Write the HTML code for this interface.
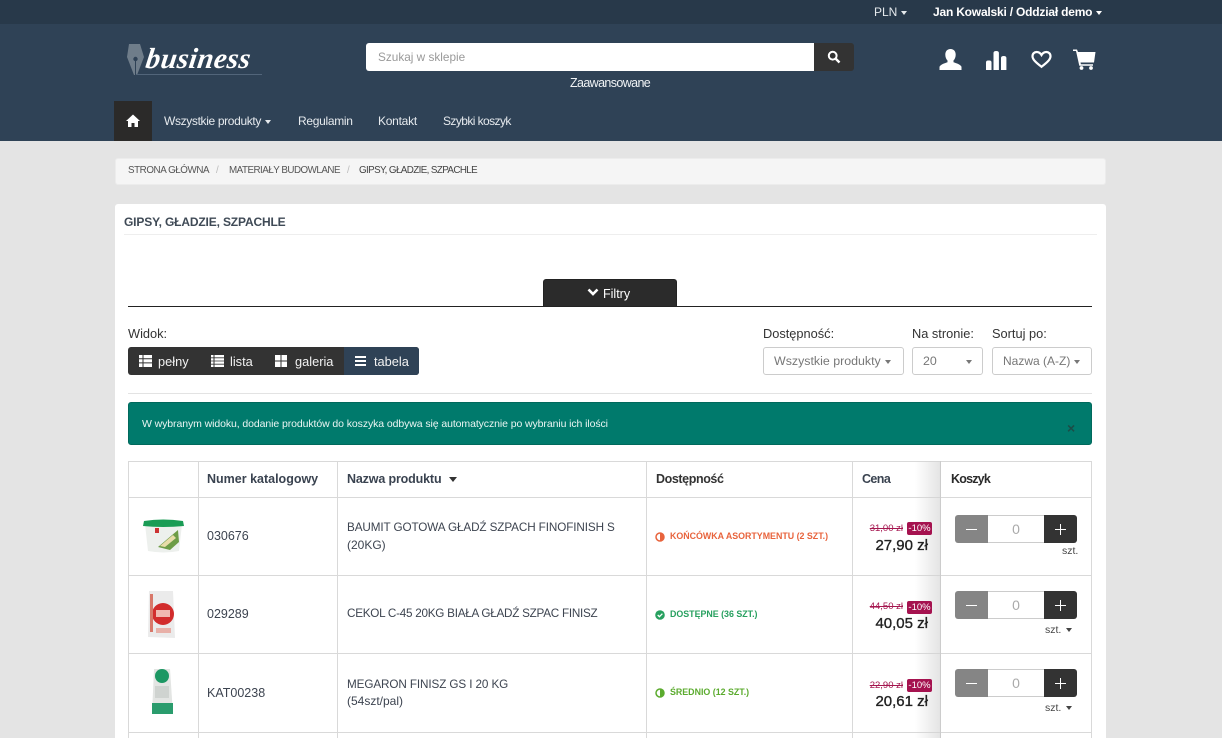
<!DOCTYPE html>
<html lang="pl"><head><meta charset="utf-8"><title>Gipsy, gładzie, szpachle</title>
<style>
*{box-sizing:border-box}
html{margin:0;padding:0;width:1222px;height:738px;overflow:hidden}
body{margin:0;padding:0;width:1222px;height:738px;overflow:hidden;position:relative;background:#e4e4e4;font-family:"Liberation Sans",sans-serif;font-size:12.5px;color:#333}
.a{position:absolute;white-space:nowrap}
.caret{display:inline-block;width:0;height:0;border-left:3.5px solid transparent;border-right:3.5px solid transparent;border-top:4px solid currentColor;vertical-align:middle;margin-left:4px}
.line{position:absolute;background:#d9d9d9}
.sel{position:absolute;top:347px;height:28px;border:1px solid #ccc;border-radius:3px;background:#fff;color:#777;line-height:26px;padding-left:10px;font-size:12.4px;white-space:nowrap}
.lbl{position:absolute;top:326px;color:#333;font-size:12.8px;white-space:nowrap}
.th{position:absolute;top:472px;font-weight:bold;font-size:12.5px;color:#3a4350;white-space:nowrap}
.td{position:absolute;font-size:12.5px;color:#3d4450;white-space:nowrap}
.st{position:absolute;font-size:8.85px;font-weight:bold;white-space:nowrap}
.old{position:absolute;font-size:9.5px;color:#a5164f;text-decoration:line-through;white-space:nowrap;text-align:right;right:319px}
.bad{position:absolute;left:907px;width:25px;height:13px;background:#a5124f;color:#fff;font-size:9.5px;line-height:13px;text-align:center;border-radius:2px}
.pr{position:absolute;font-size:15px;color:#222;right:294px;white-space:nowrap;-webkit-text-stroke:.35px #222}
.m{position:absolute;left:955px;width:33px;height:28px;border-radius:3px 0 0 3px;background:linear-gradient(#fff,#fff) center/11px 1px no-repeat,#858585}
.q{position:absolute;left:988px;width:56px;height:28px;border-top:1px solid #ccc;border-bottom:1px solid #ccc;background:#fff;color:#aaa;font-size:14px;line-height:26px;text-align:center}
.p{position:absolute;left:1044px;width:33px;height:28px;border-radius:0 3px 3px 0;background:linear-gradient(#fff,#fff) center/11px 1px no-repeat,linear-gradient(#fff,#fff) center/1px 11px no-repeat,#333}
.szt{position:absolute;font-size:10.5px;color:#444;white-space:nowrap}
.tb{position:absolute;top:354px;color:#f2f2f2;font-size:12.8px;white-space:nowrap}
.nv{position:absolute;top:114px;color:#e6eaee;font-size:12px;white-space:nowrap}
.bc{position:absolute;top:165px;font-size:9.8px;color:#555;letter-spacing:-.42px;white-space:nowrap}
</style></head><body>

<div class="a" style="left:0;top:0;width:1222px;height:24px;background:#28394a"></div>
<div class="a" style="left:0;top:24px;width:1222px;height:117px;background:#2f4256"></div>
<div class="a" style="left:874px;top:5px;color:#e5e9ec;font-size:12px">PLN<span class="caret"></span></div>
<div class="a" style="left:933px;top:5px;color:#fff;font-size:12px;font-weight:bold;letter-spacing:-.2px">Jan Kowalski / Oddział demo<span class="caret"></span></div>

<!-- logo -->
<svg class="a" style="left:126px;top:43px" width="20" height="35" viewBox="0 0 20 35"><path d="M3 1h11l4 13-7 18H8L1 14z" fill="#6f7d8a"/><circle cx="9.500" cy="16" r="2.200" fill="#2f4256"/><path d="M9.500 18v14" stroke="#2f4256" stroke-width="1"/></svg>
<div class="a" style="left:146px;top:43px;color:#fff;font-family:'Liberation Serif',serif;font-style:italic;font-size:29px;letter-spacing:.4px;font-weight:bold;transform:skewX(-8deg)">business</div>
<div class="a" style="left:136px;top:74px;width:126px;height:1px;background:#52657a"></div>

<!-- search -->
<div class="a" style="left:366px;top:43px;width:449px;height:28px;background:#fff;border-radius:3px 0 0 3px;color:#999;font-size:11.8px;line-height:29px;padding-left:12px">Szukaj w sklepie</div>
<div class="a" style="left:814px;top:43px;width:40px;height:28px;background:#333;border-radius:0 3px 3px 0"></div>
<svg class="a" style="left:827px;top:50px" width="14" height="14" viewBox="0 0 14 14"><circle cx="5.700" cy="5.700" r="3.900" fill="none" stroke="#fff" stroke-width="2"/><path d="M8.500 8.500l4 4" stroke="#fff" stroke-width="2.400"/></svg>
<div class="a" style="left:570px;top:76px;color:#f0f3f5;font-size:12.5px;letter-spacing:-.62px">Zaawansowane</div>

<!-- header icons -->
<svg class="a" style="left:939px;top:48px" width="23" height="23" viewBox="0 0 23 23"><path d="M11.500 1c3.500 0 5.200 2.500 5.200 5.700 0 2.500-1 4.600-2.200 5.800v1.800c3 1.100 7 2.200 8 4.500V22H.5v-3.200c1-2.300 5-3.400 8-4.500v-1.800C7.300 11.300 6.300 9.200 6.300 6.700 6.300 3.500 8 1 11.500 1z" fill="#fff"/></svg>
<svg class="a" style="left:986px;top:50px" width="21" height="21" viewBox="0 0 21 21"><path d="M0 12.500q0-2 2-2h1.500q2 0 2 2V20H0zM7.500 3q0-2 2.700-2t2.700 2v17H7.500zM15 8q0-2 2.700-2t2.700 2v12H15z" fill="#fff"/></svg>
<svg class="a" style="left:1031px;top:50px" width="21" height="19" viewBox="0 0 21 19"><path d="M10.500 16.800C5 12.500 1.500 9.500 1.500 6.200 1.500 3.700 3.300 2 5.600 2c2 0 3.700 1 4.900 3 1.200-2 2.900-3 4.900-3 2.300 0 4.100 1.700 4.100 4.200 0 3.300-3.500 6.300-9 10.600z" fill="none" stroke="#fff" stroke-width="2.200"/></svg>
<svg class="a" style="left:1073px;top:48px" width="23" height="23" viewBox="0 0 23 23"><path d="M0 1.500h4l1 2.500h17.500l-1.500 10.500H7.500l.4 1.700H20v1.500H6.300L3 3H0z" fill="#fff"/><circle cx="8.500" cy="20" r="1.900" fill="#fff"/><circle cx="18" cy="20" r="1.900" fill="#fff"/></svg>

<!-- nav -->
<div class="a" style="left:114px;top:101px;width:38px;height:40px;background:#2b2a29"></div>
<svg class="a" style="left:126px;top:114px" width="14" height="13" viewBox="0 0 14 13"><path d="M7 .5l7 6.500h-2v6H8.500V9h-3v4H2V7H0z" fill="#fff"/></svg>
<div class="nv" style="left:164px;letter-spacing:-.35px">Wszystkie produkty<span class="caret"></span></div>
<div class="nv" style="left:298px;letter-spacing:-.3px">Regulamin</div>
<div class="nv" style="left:378px;letter-spacing:-.25px">Kontakt</div>
<div class="nv" style="left:443px;letter-spacing:-.58px">Szybki koszyk</div>

<!-- breadcrumb -->
<div class="a" style="left:115px;top:158px;width:991px;height:27px;background:#f5f5f5;border:1px solid #ececec;border-radius:3px"></div>
<div class="bc" style="left:128px">STRONA GŁÓWNA</div>
<div class="bc" style="left:216px;color:#bbb">/</div>
<div class="bc" style="left:229px;letter-spacing:-.5px">MATERIAŁY BUDOWLANE</div>
<div class="bc" style="left:347px;color:#bbb">/</div>
<div class="bc" style="left:359px;color:#444;letter-spacing:-.6px">GIPSY, GŁADZIE, SZPACHLE</div>

<!-- panel -->
<div class="a" style="left:115px;top:204px;width:991px;height:540px;background:#fff;border-radius:3px"></div>
<div class="a" style="left:124px;top:215px;font-size:12px;font-weight:bold;color:#3f4a56;letter-spacing:-.15px">GIPSY, GŁADZIE, SZPACHLE</div>
<div class="line" style="left:124px;top:234px;width:973px;height:1px;background:#eee"></div>

<div class="a" style="left:543px;top:279px;width:134px;height:28px;background:#2b2b2b;border:1px solid #222;border-bottom:0;border-radius:3px 3px 0 0;color:#fff;font-size:12.5px;line-height:28px;padding-left:59px">Filtry</div>
<svg class="a" style="left:587px;top:288px" width="12" height="9" viewBox="0 0 12 9"><path d="M1.500 1.500L6 6l4.500-4.500" fill="none" stroke="#fff" stroke-width="2.600"/></svg>
<div class="line" style="left:128px;top:306px;width:964px;height:1px;background:#222"></div>

<!-- view -->
<div class="lbl" style="left:128px">Widok:</div>
<div class="a" style="left:128px;top:347px;width:291px;height:28px;background:#333;border-radius:3px"></div>
<div class="a" style="left:344px;top:347px;width:75px;height:28px;background:#2f4256;border-radius:0 3px 3px 0"></div>
<svg class="a" style="left:139px;top:355px" width="13" height="12" viewBox="0 0 13 12"><path d="M0 0h13v3.200H0zM0 4.200h13v3.200H0zM0 8.400h13V12H0z" fill="#fff"/><path d="M4 0v12" stroke="#333"/></svg>
<div class="tb" style="left:158px">pełny</div>
<svg class="a" style="left:211px;top:355px" width="13" height="12" viewBox="0 0 13 12"><path d="M0 0h13v2.400H0zM0 3.200h13v2.400H0zM0 6.400h13v2.400H0zM0 9.600h13V12H0z" fill="#fff"/><path d="M3 0v12" stroke="#333"/></svg>
<div class="tb" style="left:230px">lista</div>
<svg class="a" style="left:275px;top:355px" width="12" height="12" viewBox="0 0 12 12"><path d="M0 0h5.500v5.500H0zM6.500 0H12v5.500H6.500zM0 6.500h5.500V12H0zM6.500 6.500H12V12H6.500z" fill="#fff"/></svg>
<div class="tb" style="left:295px">galeria</div>
<svg class="a" style="left:355px;top:356px" width="11" height="10" viewBox="0 0 11 10"><path d="M0 0h11v2H0zM0 4h11v2H0zM0 8h11v2H0z" fill="#fff"/></svg>
<div class="tb" style="left:374px">tabela</div>

<div class="lbl" style="left:763px">Dostępność:</div>
<div class="lbl" style="left:912px">Na stronie:</div>
<div class="lbl" style="left:992px">Sortuj po:</div>
<div class="sel" style="left:763px;width:141px">Wszystkie produkty<span class="caret" style="margin-left:4px"></span></div>
<div class="sel" style="left:912px;width:71px">20<span class="caret" style="position:absolute;left:53px;top:12px;margin:0"></span></div>
<div class="sel" style="left:992px;width:100px;font-size:12px">Nazwa (A-Z)<span class="caret" style="margin-left:4px"></span></div>
<div class="line" style="left:128px;top:393px;width:964px;height:1px;background:#e3e3e3"></div>

<!-- alert -->
<div class="a" style="left:128px;top:402px;width:964px;height:43px;background:#007a6c;border:1px solid #00695c;border-radius:3px"></div>
<div class="a" style="left:142px;top:418px;color:#eaf5f3;font-size:10.5px;letter-spacing:-.09px">W wybranym widoku, dodanie produktów do koszyka odbywa się automatycznie po wybraniu ich ilości</div>
<div class="a" style="left:1067px;top:420px;color:#1b4d47;font-size:14px;font-weight:bold">×</div>

<!-- table grid -->
<div class="line" style="left:128px;top:461px;width:964px;height:1px"></div>
<div class="line" style="left:128px;top:497px;width:964px;height:1px"></div>
<div class="line" style="left:128px;top:575px;width:964px;height:1px"></div>
<div class="line" style="left:128px;top:653px;width:964px;height:1px"></div>
<div class="line" style="left:128px;top:732px;width:964px;height:1px"></div>
<div class="line" style="left:128px;top:461px;width:1px;height:277px"></div>
<div class="line" style="left:198px;top:461px;width:1px;height:277px"></div>
<div class="line" style="left:337px;top:461px;width:1px;height:277px"></div>
<div class="line" style="left:646px;top:461px;width:1px;height:277px"></div>
<div class="line" style="left:852px;top:461px;width:1px;height:277px"></div>
<div class="line" style="left:1091px;top:461px;width:1px;height:277px"></div>
<div class="a" style="left:915px;top:461px;width:25px;height:277px;background:linear-gradient(90deg,rgba(210,210,210,0),rgba(210,210,210,.6))"></div>
<div class="line" style="left:940px;top:461px;width:1px;height:277px;background:#ccc"></div>

<div class="th" style="left:207px">Numer katalogowy</div>
<div class="th" style="left:347px;letter-spacing:-.15px">Nazwa produktu<span class="caret" style="margin-left:8px;border-left-width:4.500px;border-right-width:4.500px;border-top-width:5px;color:#333"></span></div>
<div class="th" style="left:656px;color:#333;letter-spacing:-.4px">Dostępność</div>
<div class="th" style="left:862px;letter-spacing:-.6px">Cena</div>
<div class="th" style="left:951px;color:#2b2b2b;letter-spacing:-.8px">Koszyk</div>

<!-- products -->
<svg class="a" style="left:143px;top:519px" width="42" height="35" viewBox="0 0 42 35"><path d="M2 5h37l-3 27q-15 3-31 0z" fill="#edf0ed"/><path d="M1 2q19-3 39 0l1 5q-21 2-41 0z" fill="#1a9c55"/><path d="M15 28L35 11l1 12-9 8z" fill="#6d9c46"/><path d="M17 27L30 16l3 3-11 9z" fill="#e8dca8"/><rect x="12" y="9" width="4" height="5" fill="#c33"/></svg>
<svg class="a" style="left:147px;top:590px" width="29" height="50" viewBox="0 0 29 50"><path d="M2 1h24l2 47-27-1z" fill="#ebebeb"/><circle cx="16" cy="24" r="11" fill="#d22c2c"/><rect x="9" y="20" width="14" height="7" fill="#f0b8b0"/><rect x="3" y="4" width="3" height="38" fill="#d8786a"/><rect x="9" y="38" width="15" height="5" fill="#e8b0a8"/></svg>
<svg class="a" style="left:150px;top:667px" width="26" height="50" viewBox="0 0 26 50"><path d="M4 2h16l3 45H2z" fill="#e3e5e3"/><circle cx="12" cy="9" r="7" fill="#1c9763"/><rect x="5" y="19" width="14" height="12" fill="#cfd3d0"/><path d="M2 36h21v11H2z" fill="#2a9c6d"/></svg>

<div class="td" style="left:207px;top:529px">030676</div>
<div class="td" style="left:207px;top:607px">029289</div>
<div class="td" style="left:207px;top:686px">KAT00238</div>

<div class="td" style="left:347px;top:521px;font-size:11.7px;letter-spacing:-.1px">BAUMIT GOTOWA GŁADŹ SZPACH FINOFINISH S</div>
<div class="td" style="left:347px;top:538px;font-size:12px">(20KG)</div>
<div class="td" style="left:347px;top:607px;font-size:11.7px;letter-spacing:-.25px">CEKOL C-45 20KG BIAŁA GŁADŹ SZPAC FINISZ</div>
<div class="td" style="left:347px;top:678px;font-size:11.7px;letter-spacing:-.1px">MEGARON FINISZ GS I 20 KG</div>
<div class="td" style="left:347px;top:694px;font-size:12px">(54szt/pal)</div>

<svg class="a" style="left:655px;top:532px" width="10" height="10" viewBox="0 0 10 10"><circle cx="5" cy="5" r="4" fill="none" stroke="#e8633c" stroke-width="1.500"/><path d="M5 1a4 4 0 0 1 0 8z" fill="#e8633c"/></svg>
<div class="st" style="left:670px;top:531px;color:#e8633c">KOŃCÓWKA ASORTYMENTU (2 SZT.)</div>
<svg class="a" style="left:655px;top:610px" width="10" height="10" viewBox="0 0 10 10"><circle cx="5" cy="5" r="4.800" fill="#27a05f"/><path d="M2.700 5l1.700 1.700 3-3" fill="none" stroke="#fff" stroke-width="1.300"/></svg>
<div class="st" style="left:670px;top:609px;color:#27a05f">DOSTĘPNE (36 SZT.)</div>
<svg class="a" style="left:655px;top:688px" width="10" height="10" viewBox="0 0 10 10"><circle cx="5" cy="5" r="4" fill="none" stroke="#5bab2e" stroke-width="1.500"/><path d="M5 1a4 4 0 0 1 0 8z" fill="#5bab2e"/></svg>
<div class="st" style="left:670px;top:687px;color:#5bab2e">ŚREDNIO (12 SZT.)</div>

<div class="old" style="top:523px">31,00 zł</div><div class="bad" style="top:522px">-10%</div>
<div class="pr" style="top:537px">27,90 zł</div>
<div class="old" style="top:601px">44,50 zł</div><div class="bad" style="top:601px">-10%</div>
<div class="pr" style="top:615px">40,05 zł</div>
<div class="old" style="top:680px">22,90 zł</div><div class="bad" style="top:679px">-10%</div>
<div class="pr" style="top:693px">20,61 zł</div>

<div class="m" style="top:515px"></div><div class="q" style="top:515px">0</div><div class="p" style="top:515px"></div>
<div class="szt" style="left:1062px;top:545px">szt.</div>
<div class="m" style="top:591px"></div><div class="q" style="top:591px">0</div><div class="p" style="top:591px"></div>
<div class="szt" style="left:1045px;top:624px">szt.<span class="caret" style="margin-left:5px"></span></div>
<div class="m" style="top:669px"></div><div class="q" style="top:669px">0</div><div class="p" style="top:669px"></div>
<div class="szt" style="left:1045px;top:702px">szt.<span class="caret" style="margin-left:5px"></span></div>

</body></html>
